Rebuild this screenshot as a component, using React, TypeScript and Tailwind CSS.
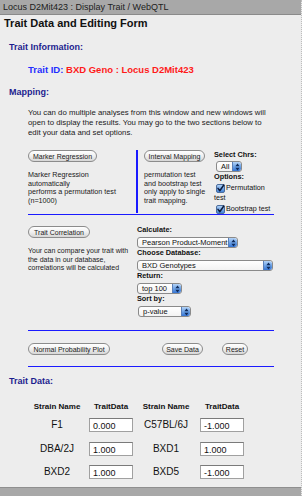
import React from "react";

function AquaButton({ label, className }: { label: string; className: string }) {
	return (
		<div
			className={`${className} h-[12px] shrink-0 rounded-full border border-[#8c8c8c] bg-linear-to-b from-white via-[#f0f0f0] to-[#d6d6d6] flex items-center justify-center text-[7px] leading-none text-[#1a1a1a] whitespace-nowrap`}
		>
			{label}
		</div>
	);
}

function Arrows() {
	return (
		<svg width="5" height="8" viewBox="0 0 5 8">
			<title>arrows</title>
			<path d="M2.5 0.6L4.6 3.2H0.4Z M2.5 7.4L4.6 4.8H0.4Z" fill="#0f2a5a" />
		</svg>
	);
}

function AquaSelect({ label, className }: { label: string; className: string }) {
	return (
		<div
			className={`${className} h-[11px] flex items-stretch rounded-[3px] border border-[#8a8a8a] bg-linear-to-b from-white to-[#f2f2f2] overflow-hidden`}
		>
			<span className="flex-1 pl-[4px] text-[7.5px] leading-[9px] whitespace-nowrap text-[#111]">
				{label}
			</span>
			<span className="w-[9px] rounded-r-[2px] border-l border-[#5a7fb8] bg-linear-to-b from-[#b4d3f6] via-[#6ea3e6] to-[#3474d4] flex items-center justify-center">
				<Arrows />
			</span>
		</div>
	);
}

function Check() {
	return (
		<svg width="9" height="9" viewBox="0 0 9 9" className="shrink-0">
			<title>checked</title>
			<defs>
				<linearGradient id="cb" x1="0" y1="0" x2="0" y2="1">
					<stop offset="0" stopColor="#b6d6f8" />
					<stop offset="1" stopColor="#3d7fd8" />
				</linearGradient>
			</defs>
			<rect x="0.5" y="0.5" width="8" height="8" rx="1.5" fill="url(#cb)" stroke="#4d6d9c" />
			<path
				d="M2 4.4L3.8 6.7L7.8 1"
				fill="none"
				stroke="#0d1c3c"
				strokeWidth="1.5"
				strokeLinecap="round"
				strokeLinejoin="round"
			/>
		</svg>
	);
}

function Label({ children }: { children: React.ReactNode }) {
	return <div className="text-[7.3px] leading-[10px] font-bold text-[#111]">{children}</div>;
}

function BlueRule() {
	return <div className="ml-[28px] w-[246px] h-[1px] shrink-0 bg-[#1a1aff]" />;
}

const rows = [
	{ h: "h-[24px]", a: "F1", av: "0.000", b: "C57BL/6J", bv: "-1.000" },
	{ h: "h-[24px]", a: "DBA/2J", av: "1.000", b: "BXD1", bv: "1.000" },
	{ h: "h-[22px]", a: "BXD2", av: "1.000", b: "BXD5", bv: "-1.000" },
];

function ValueBox({ value }: { value: string }) {
	return (
		<div className="w-[44px] h-[14px] bg-white border border-[#a0a0a0] border-t-[#7a7a7a] pl-[3px] pt-[3px] text-[9px] leading-[9px] text-[#111]">
			{value}
		</div>
	);
}

export default function App() {
	return (
		<div className="w-[302px] h-[496px] overflow-hidden bg-[#ededed] flex flex-col border-r border-dotted border-[#bdbdbd] font-['Liberation_Sans',Arial,sans-serif] text-[#111]">
			{/* window title */}
			<div className="h-[15px] shrink-0 bg-[#a8a8a8] border-b border-[#8a8a8a] pl-[3px] text-[9px] leading-[14px] text-[#1c1c1c] whitespace-nowrap">
				Locus D2Mit423 : Display Trait / WebQTL
			</div>

			<div className="mt-[1px] pl-[4px] text-[11px] leading-[14px] font-bold text-[#111]">
				Trait Data and Editing Form
			</div>

			<div className="mt-[11px] pl-[9px] text-[9px] leading-[12px] font-bold text-[#1d1d8f]">
				Trait Information:
			</div>

			<div className="mt-[11px] pl-[28px] text-[9.5px] leading-[12px] font-bold whitespace-nowrap">
				<span className="text-[#1f2fff]">Trait ID: </span>
				<span className="text-[#ff1a1a]">BXD Geno : Locus D2Mit423</span>
			</div>

			<div className="mt-[10px] pl-[9px] text-[9px] leading-[12px] font-bold text-[#1d1d8f]">
				Mapping:
			</div>

			<div className="mt-[10px] pl-[28px] text-[7.8px] leading-[10px] whitespace-nowrap text-[#1a1a1a]">
				You can do multiple analyses from this window and new windows will
				<br />
				open to display the results. You may go to the two sections below to
				<br />
				edit your data and set options.
			</div>

			{/* mapping section */}
			<div className="mt-[12px] ml-[28px] w-[246px] h-[64px] shrink-0 flex">
				<div className="w-[108px] shrink-0">
					<AquaButton label="Marker Regression" className="w-[69px]" />
					<div className="mt-[9px] text-[7.2px] leading-[8.7px] whitespace-nowrap text-[#1a1a1a]">
						Marker Regression
						<br />
						automatically
						<br />
						performs a permutation test
						<br />
						(n=1000)
					</div>
				</div>
				<div className="w-[2px] h-[63px] shrink-0 bg-[#1a1aff]" />
				<div className="flex pl-[6px]">
					<div className="w-[70px] shrink-0">
						<AquaButton label="Interval Mapping" className="w-[61px]" />
						<div className="mt-[9px] text-[7.2px] leading-[8.7px] whitespace-nowrap text-[#1a1a1a]">
							permutation test
							<br />
							and bootstrap test
							<br />
							only apply to single
							<br />
							trait mapping.
						</div>
					</div>
					<div className="w-[60px]">
						<div className="text-[7.3px] leading-[9px] font-bold">Select Chrs:</div>
						<div className="mt-[2px] ml-[2px]">
							<AquaSelect label="All" className="w-[26px] h-[10px]" />
						</div>
						<div className="text-[7.3px] leading-[9px] font-bold">Options:</div>
						<div className="mt-[2px] h-[10px] flex items-center gap-[1px] pl-[2px] text-[7.2px] whitespace-nowrap">
							<Check />
							<span>Permutation</span>
						</div>
						<div className="text-[7.2px] leading-[9px]">test</div>
						<div className="mt-[2px] h-[10px] flex items-center gap-[1px] pl-[2px] text-[7.2px] whitespace-nowrap">
							<Check />
							<span>Bootstrap test</span>
						</div>
					</div>
				</div>
			</div>
			<BlueRule />

			{/* correlation section */}
			<div className="ml-[28px] w-[246px] pt-[11px] pb-[13px] flex shrink-0">
				<div className="w-[109px] shrink-0">
					<AquaButton label="Trait Correlation" className="w-[62px]" />
					<div className="mt-[9px] text-[7px] leading-[8.7px] whitespace-nowrap text-[#1a1a1a]">
						Your can compare your trait with
						<br />
						the data in our database,
						<br />
						correlations will be calculated
					</div>
				</div>
				<div className="flex flex-col -mt-[1px]">
					<Label>Calculate:</Label>
					<div className="mt-[2px]">
						<AquaSelect label="Pearson Product-Moment" className="w-[101px]" />
					</div>
					<Label>Choose Database:</Label>
					<div className="mt-[2px]">
						<AquaSelect label="BXD Genotypes" className="w-[136px]" />
					</div>
					<Label>Return:</Label>
					<div className="mt-[2px]">
						<AquaSelect label="top 100" className="w-[45px]" />
					</div>
					<Label>Sort by:</Label>
					<div className="mt-[2px] ml-[1px]">
						<AquaSelect label="p-value" className="w-[53px]" />
					</div>
				</div>
			</div>
			<BlueRule />

			{/* action buttons */}
			<div className="ml-[28px] w-[246px] pt-[12px] pb-[11px] flex shrink-0">
				<AquaButton label="Normal Probability Plot" className="w-[82px]" />
				<AquaButton label="Save Data" className="w-[41px] ml-[52px]" />
				<AquaButton label="Reset" className="w-[26px] ml-[19px]" />
			</div>
			<BlueRule />

			<div className="mt-[8px] pl-[9px] text-[9px] leading-[12px] font-bold text-[#1d1d8f]">
				Trait Data:
			</div>

			{/* trait data table */}
			<div className="mt-[14px] ml-[28px] grid grid-cols-[58px_50px_60px_52px] text-[8px] leading-[12px] font-bold text-[#111]">
				<div className="text-center">Strain Name</div>
				<div className="text-center">TraitData</div>
				<div className="text-center">Strain Name</div>
				<div className="text-center">TraitData</div>
			</div>
			<div className="ml-[28px] flex flex-col">
				{rows.map((r) => (
					<div key={r.a} className={`${r.h} grid grid-cols-[58px_50px_60px_52px] items-center text-[10px]`}>
						<div className="text-center -mt-[1px]">{r.a}</div>
						<div className="flex justify-center">
							<ValueBox value={r.av} />
						</div>
						<div className="text-center -mt-[1px]">{r.b}</div>
						<div className="flex justify-center">
							<ValueBox value={r.bv} />
						</div>
					</div>
				))}
			</div>

			<div className="flex-1" />
			<div className="h-[9px] shrink-0 bg-[#a8a8a8] border-t border-[#8f8f8f]" />
		</div>
	);
}
